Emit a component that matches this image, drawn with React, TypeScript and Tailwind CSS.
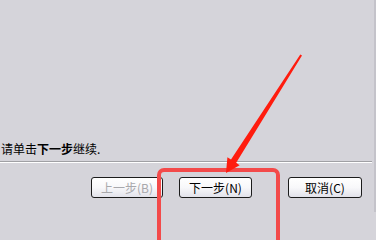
import React from 'react'

const font = { fontFamily: '"Noto Sans CJK SC", "Liberation Sans", sans-serif' }

function Btn({ label, hot, disabled, w }: { label: string; hot: string; disabled?: boolean; w: string }) {
  return (
    <div
      className={`${w} h-[21px] rounded-[3px] border border-[#1c1c1c] bg-gradient-to-b from-white via-[#f8f8fa] to-[#e2e2ea] flex items-center justify-center text-[12px] leading-none ${
        disabled ? 'text-[#a8a8ac]' : 'text-black'
      }`}
    >
      <span>{label}</span>
      <span>({hot})</span>
    </div>
  )
}

export default function App() {
  return (
    <div className="relative min-h-screen bg-[#d5d4da] overflow-hidden" style={font}>
      <div className="w-[376px] h-[212px] flex">
        <div className="w-[374px] h-full flex flex-col">
          <div className="flex-1" />
          <p className="pl-[1px] text-[12px] leading-[16px] text-black mb-[4px] whitespace-nowrap">
            请单击<b>下一步</b>继续.
          </p>
          <div className="w-[372px] h-px bg-[#a0a0a4]" />
          <div className="w-[372px] h-px bg-white" />
          <div className="flex mt-[14px] mb-[14px] pl-[91px]">
            <Btn label="上一步" hot="B" disabled w="w-[72px]" />
            <div className="w-[16px]" />
            <Btn label="下一步" hot="N" w="w-[73px]" />
            <div className="w-[36px]" />
            <Btn label="取消" hot="C" w="w-[74px]" />
          </div>
        </div>
        <div className="w-[2px] h-full bg-[#c4c3ca]" />
      </div>

      {/* annotation overlay */}
      <div className="absolute left-[157px] top-[168px] bottom-0 w-[123px] rounded-t-[7px] border-t-4 border-x-4 border-[#f34a4a]" />
      <svg className="absolute left-0 top-0" width="376" height="212">
        <polygon
          points="300.3,54.6 302,55.6 236.2,162.8 239.6,165.2 226,173 227.4,157.2 231,159.6"
          fill="#ff1c0e"
        />
      </svg>
    </div>
  )
}
